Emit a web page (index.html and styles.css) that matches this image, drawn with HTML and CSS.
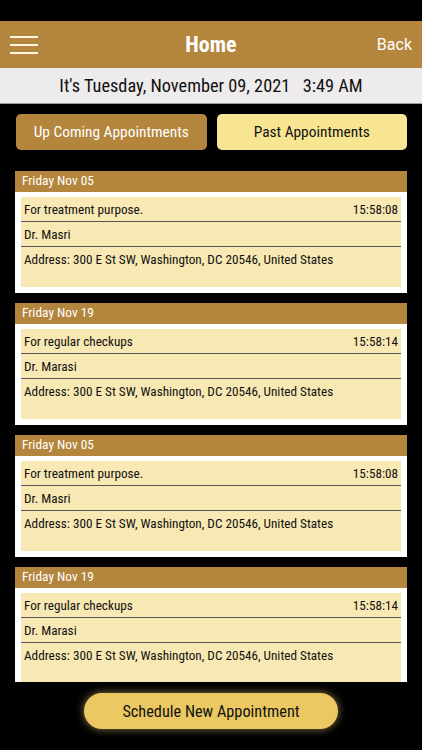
FILE: index.html
```html
<!DOCTYPE html>
<html lang="en">
  <head>
    <meta charset="UTF-8" />
    <meta name="viewport" content="width=device-width, initial-scale=1.0" />
    <title>Home</title>
    <link rel="stylesheet" href="styles.css">
  </head>
  <body>
    <div class="status"></div>
    <header class="topbar">
      <div class="menu">
        <span></span>
        <span></span>
        <span></span>
      </div>
      <h1>Home</h1>
      <a class="back" href="#">Back</a>
    </header>
    <div class="today">It's Tuesday, November 09, 2021&nbsp;&nbsp;&nbsp;3:49 AM</div>

    <nav class="tabs">
      <button class="tab tab-active">Up Coming Appointments</button>
      <button class="tab tab-past">Past Appointments</button>
    </nav>

    <main class="list">
      <section class="card">
        <div class="card-date">Friday Nov 05</div>
        <div class="card-body">
          <div class="row"><span>For treatment purpose.</span><span>15:58:08</span></div>
          <div class="row">Dr. Masri</div>
          <div class="row row-address">Address: 300 E St SW, Washington, DC 20546, United States</div>
        </div>
      </section>
      <section class="card">
        <div class="card-date">Friday Nov 19</div>
        <div class="card-body">
          <div class="row"><span>For regular checkups</span><span>15:58:14</span></div>
          <div class="row">Dr. Marasi</div>
          <div class="row row-address">Address: 300 E St SW, Washington, DC 20546, United States</div>
        </div>
      </section>
      <section class="card">
        <div class="card-date">Friday Nov 05</div>
        <div class="card-body">
          <div class="row"><span>For treatment purpose.</span><span>15:58:08</span></div>
          <div class="row">Dr. Masri</div>
          <div class="row row-address">Address: 300 E St SW, Washington, DC 20546, United States</div>
        </div>
      </section>
      <section class="card">
        <div class="card-date">Friday Nov 19</div>
        <div class="card-body">
          <div class="row"><span>For regular checkups</span><span>15:58:14</span></div>
          <div class="row">Dr. Marasi</div>
          <div class="row row-address">Address: 300 E St SW, Washington, DC 20546, United States</div>
        </div>
      </section>
    </main>

    <footer class="bottom">
      <button class="schedule">Schedule New Appointment</button>
    </footer>
  </body>
</html>
```

FILE: styles.css
```css
/* Общие стили */
* {
  margin: 0;
  padding: 0;
  box-sizing: border-box;
}

body {
  font-family: "Roboto", "Liberation Sans", sans-serif;
  font-stretch: 75%; /* узкое начертание */
  background-color: #000;
  width: 422px;
  height: 750px;
  overflow: hidden;
}

.status {
  height: 21px;
}

/* Шапка */
.topbar {
  height: 47px;
  background-color: #b3853d;
  display: grid;
  grid-template-columns: 1fr auto 1fr;
  align-items: center;
  padding: 0 10px;
  color: #fff;
}

.menu {
  width: 28px;
  display: flex;
  flex-direction: column;
  gap: 6px;
}

.menu span {
  display: block;
  height: 2px;
  background-color: #fff6e0;
}

.topbar h1 {
  font-size: 22px;
  font-weight: 700;
}

.back {
  justify-self: end;
  color: #fff;
  text-decoration: none;
  font-size: 16px;
  font-stretch: 100%;
}

.today {
  height: 36px;
  background-color: #eeebec;
  color: #111;
  font-size: 18.3px;
  display: flex;
  align-items: center;
  justify-content: center;
  border-bottom: 1px solid #9c9c9c;
}

/* Вкладки */
.tabs {
  display: flex;
  gap: 10px;
  padding: 10px 15px 0 16px;
}

.tab {
  flex: 1;
  height: 36px;
  border: none;
  border-radius: 5px;
  font-family: inherit;
  font-stretch: 75%;
  font-size: 15.4px;
}

.tab-active {
  background-color: #b3853d;
  color: #fff;
}

.tab-past {
  background-color: #f8e592;
  color: #111;
}

/* Карточки */
.list {
  height: 532px; /* прокручиваемая область */
  overflow: hidden;
  padding: 21px 15px 0 15px;
  display: flex;
  flex-direction: column;
  gap: 10px;
}

.card {
  flex-shrink: 0;
  background-color: #fff;
  height: 122px;
}

.card-date {
  height: 21px;
  background-color: #b3853d;
  color: #fff;
  font-size: 13.4px;
  padding: 2px 7px;
}

.card-body {
  margin: 5px 6px;
  background-color: #f8e8b3;
  height: 90px;
  font-size: 13.2px;
  color: #111;
}

.row {
  height: 25px;
  display: flex;
  align-items: center;
  justify-content: space-between;
  padding: 0 3px;
  border-bottom: 1px solid #555;
}

.row-address {
  height: 29px;
  border-bottom: none;
  align-items: flex-start;
  padding-top: 5px;
}

/* Нижняя кнопка */
.bottom {
  display: flex;
  justify-content: center;
  padding-top: 11px;
}

.schedule {
  width: 254px;
  height: 36px;
  border: none;
  border-radius: 18px;
  background-color: #ebc862;
  color: #111;
  font-family: inherit;
  font-stretch: 75%;
  font-size: 16.3px;
  box-shadow: 0 0 8px rgba(255, 225, 140, 0.55);
}
```
